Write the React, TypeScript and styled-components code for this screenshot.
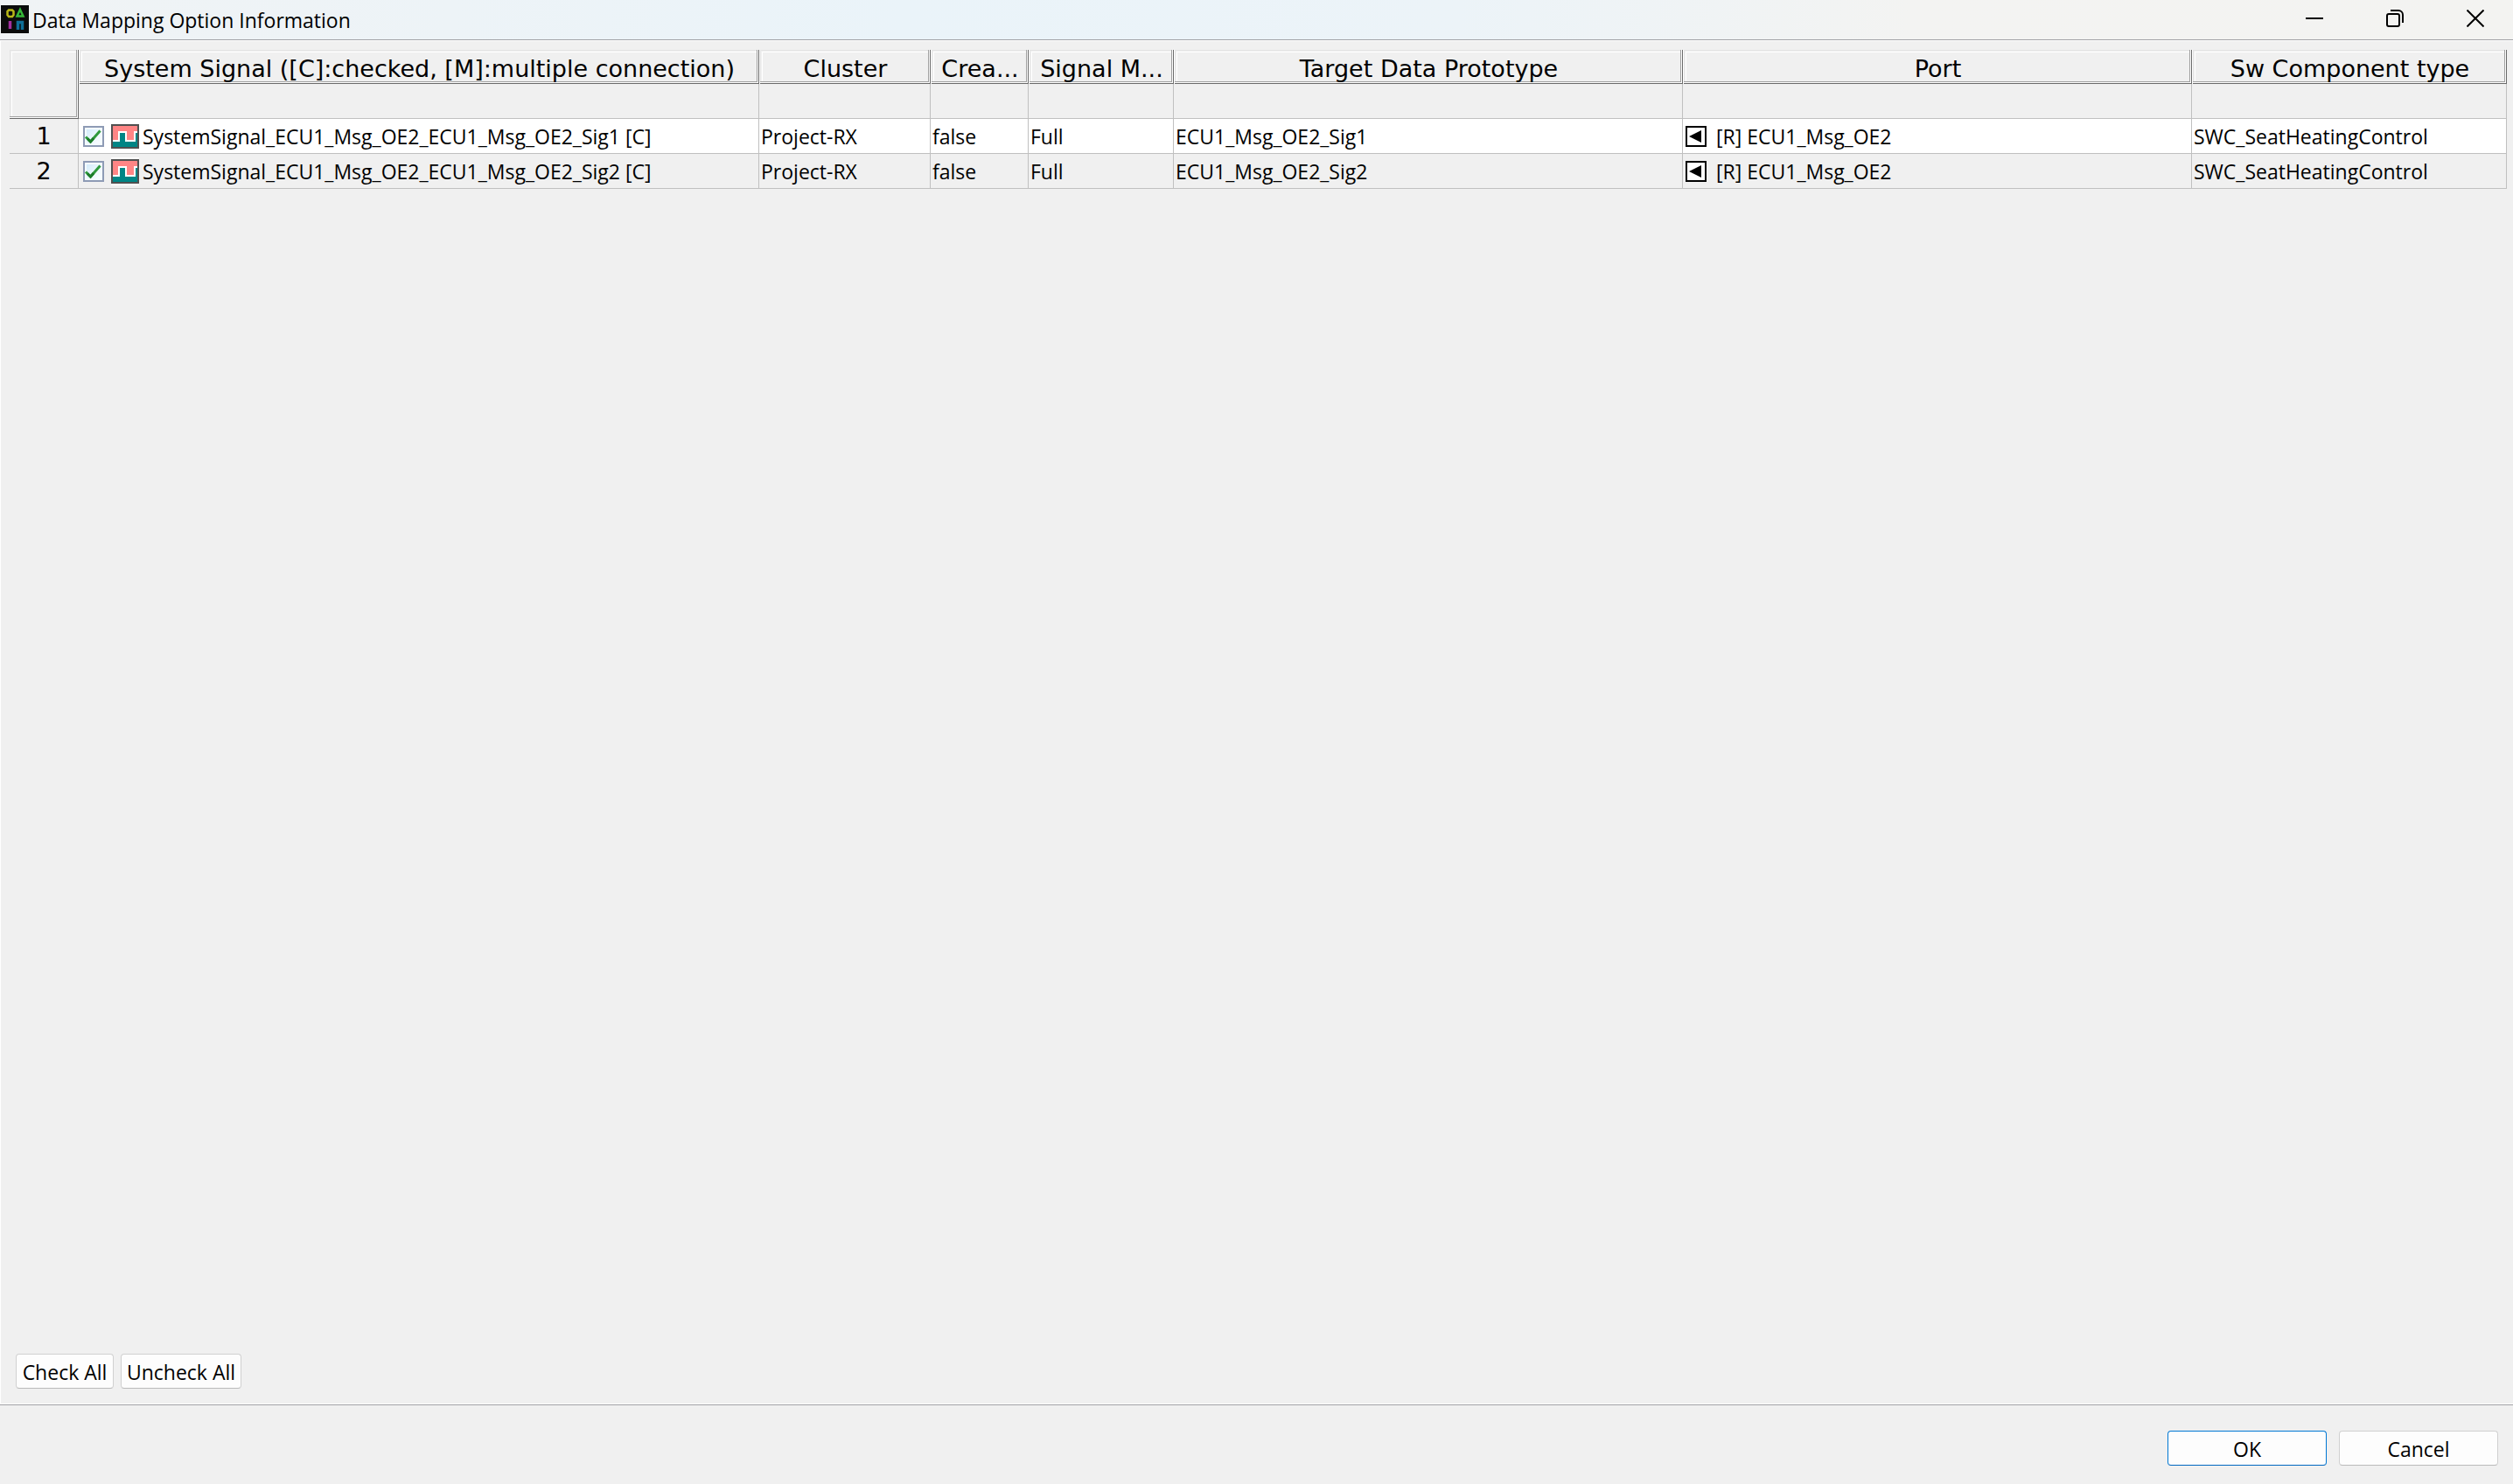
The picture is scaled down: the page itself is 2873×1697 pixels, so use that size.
import React, { useState } from 'react';
import styled, { createGlobalStyle } from 'styled-components';

const UI_FONT = '"Open Sans", "Noto Sans", sans-serif';
const HEADER_FONT = 'Verdana, "DejaVu Sans", sans-serif';
const FACE = '#f0f0f0';
const GRID = '#c0c0c0';

const GlobalStyle = createGlobalStyle`
  *, *::before, *::after { box-sizing: border-box; }
  body { margin: 0; background: ${FACE}; }
`;

const Window = styled.div`
  display: flex;
  flex-direction: column;
  min-height: 100vh;
  background: ${FACE};
  color: #000;
  font-family: ${UI_FONT};
  font-size: 23px;
  line-height: 32px;
`;

const TitleBar = styled.header`
  display: flex;
  align-items: center;
  height: 46px;
  padding: 0 33px 2px 1px;
  border-bottom: 1px solid #a0a0a5;
  background: linear-gradient(90deg, #f0f3f5 0%, #eaf3f9 36%, #ecf3f8 58%, #f3f3f2 76%, #f3f3f1 100%);
`;

const Title = styled.h1`
  flex: 1;
  margin: 0;
  padding: 2px 0 0 4px;
  font-size: 23px;
  font-weight: 400;
  line-height: 32px;
`;

const WindowControls = styled.div`
  display: flex;
  gap: 72px;
  padding-bottom: 2px;
`;

const ControlButton = styled.button`
  display: grid;
  width: 20px;
  height: 20px;
  padding: 0;
  border: 0;
  background: none;
  color: #000;
`;

const Body = styled.main`
  flex: 1;
  display: flex;
  flex-direction: column;
  justify-content: space-between;
  padding: 10px 7px 17px 10px;
  border: 1px solid #fff;
  border-right: 0;
`;

const Grid = styled.table`
  width: 100%;
  table-layout: fixed;
  border-collapse: separate;
  border-spacing: 0;
`;

const Column = styled.col<{ $width?: number }>`
  width: ${({ $width }) => ($width ? `${$width}px` : 'auto')};
`;

const HeaderCell = styled.th<{ $corner?: boolean }>`
  height: ${({ $corner }) => ($corner ? 79 : 39)}px;
  padding: 4px 4px 0;
  border-left: ${({ $corner }) => ($corner ? 0 : 1)}px solid #fff;
  box-shadow:
    inset -1px -1px 0 #696969,
    inset -2px -2px 0 #fff,
    inset -3px -3px 0 #a0a0a0,
    inset 1px 1px 0 #e3e3e3,
    inset 2px 2px 0 ${FACE},
    inset 3px 3px 0 #fff;
  font-family: ${HEADER_FONT};
  font-size: 27px;
  font-weight: 400;
  line-height: 32px;
  white-space: nowrap;
  overflow: hidden;
`;

const Row = styled.tr<{ $base?: boolean }>`
  background: ${({ $base }) => ($base ? '#fff' : FACE)};
`;

const Cell = styled.td`
  height: 40px;
  padding: 1px 2px 0;
  border-right: 1px solid ${GRID};
  border-bottom: 1px solid ${GRID};
  white-space: nowrap;
  overflow: hidden;
`;

const RowHeader = styled.th`
  height: 40px;
  padding: 1px 0 0;
  border-right: 1px solid ${GRID};
  border-bottom: 1px solid ${GRID};
  background: ${FACE};
  font-family: ${HEADER_FONT};
  font-size: 27px;
  font-weight: 400;
  line-height: 32px;
`;

const SignalLabel = styled.label`
  display: flex;
  align-items: center;
  padding-left: 3px;
`;

const CheckFrame = styled.span`
  display: grid;
  margin-right: 8px;
  > * { grid-area: 1 / 1; }
`;

const CheckInput = styled.input`
  appearance: none;
  width: 24px;
  height: 24px;
  margin: 0;
  border: 2px solid #8e9bb5;
  background: linear-gradient(135deg, #cfeafa 0%, #eef8fd 60%, #fff 100%);
  box-shadow: inset 0 0 0 2px #f4fbff;
`;

const Mark = styled.svg`
  pointer-events: none;
`;

const SignalText = styled.span`
  padding-left: 4px;
`;

const PortContent = styled.div`
  display: flex;
  align-items: center;
  gap: 11px;
  padding-left: 1px;
`;

const Actions = styled.div`
  display: flex;
  gap: 8px;
  padding-left: 7px;
`;

const Footer = styled.footer`
  display: flex;
  justify-content: flex-end;
  gap: 14px;
  padding: 29px 17px 21px;
  border-top: 1px solid #a0a0a5;
`;

const Button = styled.button<{ $width: number; $primary?: boolean }>`
  width: ${({ $width }) => $width}px;
  height: 40px;
  padding: 2px 0 0;
  border: 1px solid ${({ $primary }) => ($primary ? '#0078d4' : '#d0d0d0')};
  border-bottom-color: ${({ $primary }) => ($primary ? '#0067c0' : '#bababa')};
  border-radius: 4px;
  background: #fdfdfd;
  color: #000;
  font-family: ${UI_FONT};
  font-size: 23px;
  line-height: 32px;
  white-space: nowrap;
`;

const AppIcon = () => (
  <svg width="32" height="32" viewBox="0 0 32 32" aria-hidden="true">
    <rect width="32" height="32" fill="#0b0c0c" />
    <path d="M9 5.500h4l1.500 1.500v4l-1.500 2H9l-1.500-2V7z" fill="none" stroke="#b9b817" strokeWidth="2.500" />
    <path d="M22 5l3.500 7.500h-7z" fill="none" stroke="#37b93a" strokeWidth="2.500" />
    <path d="M10.500 18v9" stroke="#a32fa0" strokeWidth="3.500" />
    <path d="M19.500 28v-8.500h5V28" fill="none" stroke="#0e6f99" strokeWidth="3.500" />
  </svg>
);

const SignalIcon = () => (
  <svg width="32" height="32" viewBox="0 0 32 32" shapeRendering="crispEdges" aria-hidden="true">
    <rect width="32" height="32" fill="#fff" />
    <rect y="2" width="32" height="28" fill="#505050" />
    <rect x="2" y="4" width="28" height="24" fill="#ff8585" />
    <path d="M2 22h8V12h6v10h12V12h2v16H2z" fill="#008585" />
    <path d="M2 21h7V11h8v10h10V11h3" fill="none" stroke="#fff" strokeWidth="2" />
  </svg>
);

const PortIcon = () => (
  <svg width="24" height="24" viewBox="0 0 24 24" aria-hidden="true">
    <rect x="1" y="1" width="22" height="22" fill="#fff" stroke="#000" strokeWidth="2" />
    <path d="M4 12 18 5v14z" fill="#000" />
  </svg>
);

const CheckMark = () => (
  <Mark width="24" height="24" viewBox="0 0 24 24" aria-hidden="true">
    <path d="M3 12.500 8.500 18 19.500 5.500" fill="none" stroke="#2f9a3c" strokeWidth="3" />
    <path d="M5 14.500 8.500 18 12 14" fill="none" stroke="#1c7c2a" strokeWidth="3" />
  </Mark>
);

const columns = [
  { title: 'System Signal ([C]:checked, [M]:multiple connection)', width: 778 },
  { title: 'Cluster', width: 196 },
  { title: 'Crea...', width: 112 },
  { title: 'Signal M...', width: 166 },
  { title: 'Target Data Prototype', width: 582 },
  { title: 'Port', width: 582 },
  { title: 'Sw Component type' },
];

const rows = [1, 2].map((n) => ({
  id: n,
  signal: `SystemSignal_ECU1_Msg_OE2_ECU1_Msg_OE2_Sig${n} [C]`,
  cluster: 'Project-RX',
  create: 'false',
  mapping: 'Full',
  target: `ECU1_Msg_OE2_Sig${n}`,
  port: '[R] ECU1_Msg_OE2',
  component: 'SWC_SeatHeatingControl',
}));

export default function App() {
  const [checked, setChecked] = useState<Record<number, boolean>>({ 1: true, 2: true });
  const setAll = (value: boolean) => setChecked({ 1: value, 2: value });

  return (
    <Window>
      <GlobalStyle />
      <TitleBar>
        <AppIcon />
        <Title>Data Mapping Option Information</Title>
        <WindowControls>
          <ControlButton type="button" aria-label="Minimize">
            <svg width="20" height="20" viewBox="0 0 20 20">
              <path d="M0 10h20" stroke="currentColor" strokeWidth="2" />
            </svg>
          </ControlButton>
          <ControlButton type="button" aria-label="Restore">
            <svg width="20" height="20" viewBox="0 0 20 20" fill="none" stroke="currentColor" strokeWidth="2">
              <rect x="1" y="5" width="14" height="14" rx="2" />
              <path d="M5 1h9a5 5 0 0 1 5 5v9" />
            </svg>
          </ControlButton>
          <ControlButton type="button" aria-label="Close">
            <svg width="20" height="20" viewBox="0 0 20 20">
              <path d="M0.500 0.500l19 19M19.500 0.500l-19 19" stroke="currentColor" strokeWidth="2" />
            </svg>
          </ControlButton>
        </WindowControls>
      </TitleBar>

      <Body>
        <Grid>
          <colgroup>
            <Column $width={79} />
            {columns.map((c) => (
              <Column key={c.title} $width={c.width} />
            ))}
          </colgroup>
          <thead>
            <tr>
              <HeaderCell $corner rowSpan={2} />
              {columns.map((c) => (
                <HeaderCell key={c.title} scope="col">{c.title}</HeaderCell>
              ))}
            </tr>
            <Row>
              {columns.map((c) => (
                <Cell key={c.title} />
              ))}
            </Row>
          </thead>
          <tbody>
            {rows.map((r) => (
              <Row key={r.id} $base={r.id % 2 === 1}>
                <RowHeader scope="row">{r.id}</RowHeader>
                <Cell>
                  <SignalLabel>
                    <CheckFrame>
                      <CheckInput
                        type="checkbox"
                        checked={checked[r.id]}
                        onChange={(e) => setChecked({ ...checked, [r.id]: e.target.checked })}
                      />
                      {checked[r.id] && <CheckMark />}
                    </CheckFrame>
                    <SignalIcon />
                    <SignalText>{r.signal}</SignalText>
                  </SignalLabel>
                </Cell>
                <Cell>{r.cluster}</Cell>
                <Cell>{r.create}</Cell>
                <Cell>{r.mapping}</Cell>
                <Cell>{r.target}</Cell>
                <Cell>
                  <PortContent>
                    <PortIcon />
                    <span>{r.port}</span>
                  </PortContent>
                </Cell>
                <Cell>{r.component}</Cell>
              </Row>
            ))}
          </tbody>
        </Grid>
        <Actions>
          <Button type="button" $width={112} onClick={() => setAll(true)}>Check All</Button>
          <Button type="button" $width={138} onClick={() => setAll(false)}>Uncheck All</Button>
        </Actions>
      </Body>

      <Footer>
        <Button type="button" $width={182} $primary>OK</Button>
        <Button type="button" $width={182}>Cancel</Button>
      </Footer>
    </Window>
  );
}
